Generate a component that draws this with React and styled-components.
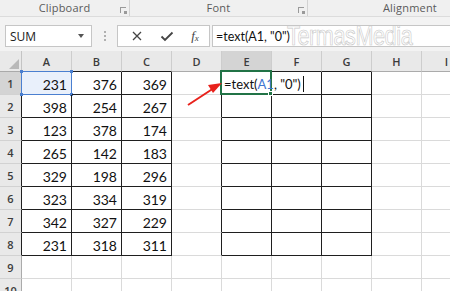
import React from "react"
import styled, { createGlobalStyle, css } from "styled-components"

const GlobalStyle = createGlobalStyle`
  html, body {
    margin: 0;
    padding: 0;
    background: #f3f3f3;
  }
  body {
    width: 450px;
    height: 291px;
    overflow: hidden;
    font-family: "Open Sans", "Liberation Sans", sans-serif;
  }
`

const COLS = ["A", "B", "C", "D", "E", "F", "G", "H", "I"]
const ROWS = [1, 2, 3, 4, 5, 6, 7, 8, 9, 10]

const DATA = [
  [231, 376, 369],
  [398, 254, 267],
  [123, 378, 174],
  [265, 142, 183],
  [329, 198, 296],
  [323, 334, 319],
  [342, 327, 229],
  [231, 318, 311],
]

// bordered ranges: A1:C8 and E1:G8 (col index 1-based, 0 = row header)
const RANGES = [
  { c1: 1, c2: 3, r1: 1, r2: 8 },
  { c1: 5, c2: 7, r1: 1, r2: 8 },
]

const rightDark = (r, c) =>
  RANGES.some(g => r >= g.r1 && r <= g.r2 && c >= g.c1 - 1 && c <= g.c2)
const bottomDark = (r, c) =>
  RANGES.some(g => c >= g.c1 && c <= g.c2 && r >= g.r1 - 1 && r <= g.r2)

const App = () => {
  return (
    <>
      <GlobalStyle />
      <Window>
        <RibbonLabels>
          <Group $width={130}>
            <GroupLabel>Clipboard</GroupLabel>
            <Launcher />
          </Group>
          <Group $width={178}>
            <GroupLabel>Font</GroupLabel>
            <Launcher />
          </Group>
          <Group $grow $align="flex-end">
            <GroupLabel $padRight={13}>Alignment</GroupLabel>
          </Group>
        </RibbonLabels>

        <FormulaRow>
          <NameBox>
            <span>SUM</span>
            <DropArrow />
          </NameBox>
          <Grip>
            <i />
            <i />
            <i />
          </Grip>
          <FormulaButtons>
            <IconButton>
              <svg width="12" height="12" viewBox="0 0 12 12">
                <path d="M2 2 L10 10 M10 2 L2 10" stroke="#444" strokeWidth="1.3" fill="none" />
              </svg>
            </IconButton>
            <IconButton>
              <svg width="14" height="12" viewBox="0 0 14 12">
                <path d="M1.5 6.5 L5 10 L12.5 2.5" stroke="#444" strokeWidth="1.8" fill="none" />
              </svg>
            </IconButton>
            <IconButton>
              <Fx>
                f<sub>x</sub>
              </Fx>
            </IconButton>
          </FormulaButtons>
          <FormulaInput>
            <FormulaText>=text(A1, "0")</FormulaText>
            <Watermark>TermasMedia</Watermark>
          </FormulaInput>
        </FormulaRow>

        <Sheet>
          <Corner>
            <svg width="10" height="10" viewBox="0 0 10 10">
              <path d="M10 0 L10 10 L0 10 Z" fill="#b9b9b9" />
            </svg>
          </Corner>
          {COLS.map((c, i) => (
            <ColHead key={c} $selected={c === "E"} $dark={bottomDark(0, i + 1)}>
              {c}
            </ColHead>
          ))}
          {ROWS.map(r => (
            <React.Fragment key={r}>
              <RowHead $selected={r === 1} $dark={rightDark(r, 0)}>
                {r}
              </RowHead>
              {COLS.map((c, i) => {
                const ci = i + 1
                const value = DATA[r - 1] && ci <= 3 ? DATA[r - 1][ci - 1] : null
                return (
                  <Cell
                    key={c}
                    $right={rightDark(r, ci)}
                    $bottom={bottomDark(r, ci)}
                  >
                    {r === 1 && c === "A" && (
                      <RefFrame>
                        <Handle $pos="tl" />
                        <Handle $pos="tr" />
                        <Handle $pos="bl" />
                        <Handle $pos="br" />
                      </RefFrame>
                    )}
                    {value !== null && <Num>{value}</Num>}
                    {r === 1 && c === "E" && (
                      <>
                        <ActiveFrame>
                          <FillHandle />
                        </ActiveFrame>
                        <Edit>
                          =text(<Ref>A1</Ref>, "0")<Caret />
                        </Edit>
                      </>
                    )}
                  </Cell>
                )
              })}
            </React.Fragment>
          ))}
          <Pointer width="450" height="240" viewBox="0 0 450 240">
            <line x1="188" y1="54" x2="214" y2="37" stroke="#e8221c" strokeWidth="2" />
            <path d="M222 32 L208 34 L213 42 Z" fill="#e8221c" />
          </Pointer>
        </Sheet>
      </Window>
    </>
  )
}

const Window = styled.div`
  width: 450px;
  height: 291px;
  overflow: hidden;
  display: flex;
  flex-direction: column;
`

const RibbonLabels = styled.div`
  height: 16px;
  display: flex;
  background: #f0f0f0;
  border-bottom: 1px solid #dcdcdc;
  flex-shrink: 0;
`

const Group = styled.div`
  width: ${p => (p.$grow ? "auto" : `${p.$width}px`)};
  flex: ${p => (p.$grow ? "1" : "0 0 auto")};
  display: flex;
  align-items: center;
  justify-content: ${p => p.$align || "center"};
  position: relative;
  border-right: ${p => (p.$grow ? "none" : "1px solid #d2d2d2")};
  box-sizing: border-box;
  height: 16px;
`

const GroupLabel = styled.span`
  font-size: 11px;
  color: #5a5a5a;
  letter-spacing: 0.2px;
  padding-right: ${p => p.$padRight || 0}px;
  line-height: 16px;
`

const Launcher = styled.span`
  position: absolute;
  right: 3px;
  top: 7px;
  width: 5px;
  height: 5px;
  border-left: 1px solid #9a9a9a;
  border-top: 1px solid #9a9a9a;
  &::after {
    content: "";
    position: absolute;
    right: -1px;
    bottom: -1px;
    width: 3px;
    height: 3px;
    background: #9a9a9a;
  }
`

const FormulaRow = styled.div`
  display: flex;
  align-items: stretch;
  height: 22px;
  margin: 8px 0 4px 5px;
  flex-shrink: 0;
`

const NameBox = styled.div`
  width: 87px;
  box-sizing: border-box;
  background: #fff;
  border: 1px solid #c6c6c6;
  display: flex;
  align-items: center;
  justify-content: space-between;
  padding: 0 7px 0 4px;
  font-size: 12px;
  color: #222;
`

const DropArrow = styled.span`
  width: 0;
  height: 0;
  border-left: 3.5px solid transparent;
  border-right: 3.5px solid transparent;
  border-top: 4px solid #555;
`

const Grip = styled.div`
  width: 25px;
  display: flex;
  flex-direction: column;
  align-items: center;
  justify-content: center;
  gap: 2px;
  i {
    display: block;
    width: 2px;
    height: 2px;
    background: #b0b0b0;
  }
`

const FormulaButtons = styled.div`
  width: 93px;
  box-sizing: border-box;
  background: #fff;
  border: 1px solid #c6c6c6;
  display: grid;
  grid-template-columns: 32px 28px 1fr;
  align-items: center;
  padding-left: 3px;
`

const IconButton = styled.span`
  display: flex;
  align-items: center;
  justify-content: center;
`

const Fx = styled.span`
  font-family: "Liberation Serif", serif;
  font-style: italic;
  font-size: 13px;
  color: #444;
  sub {
    font-size: 9px;
    vertical-align: -1px;
  }
`

const FormulaInput = styled.div`
  flex: 1;
  margin-left: 2px;
  background: #fff;
  border: 1px solid #c6c6c6;
  border-right: none;
  display: flex;
  align-items: center;
  padding-left: 3px;
  overflow: hidden;
  white-space: nowrap;
`

const FormulaText = styled.span`
  font-family: "Lato", "Open Sans", sans-serif;
  font-size: 12.5px;
  color: #111;
`

const Watermark = styled.span`
  display: inline-block;
  margin-left: -3px;
  font-family: "Liberation Sans", sans-serif;
  font-size: 27px;
  line-height: 22px;
  letter-spacing: -0.5px;
  color: #fff;
  -webkit-text-stroke: 0.7px #c9c9c9;
  transform: scaleX(0.8);
  transform-origin: left center;
`

const Sheet = styled.div`
  position: relative;
  display: grid;
  grid-template-columns: 22px repeat(9, 50px);
  grid-template-rows: 21px;
  grid-auto-rows: 23px;
  background: #fff;
  overflow: hidden;
  flex: 1;
`

const headBase = css`
  box-sizing: border-box;
  display: flex;
  align-items: center;
  justify-content: center;
  font-family: "Open Sans", sans-serif;
  font-size: 11px;
  font-weight: 600;
  color: #3c3c3c;
`

const Corner = styled.div`
  ${headBase};
  background: #e9e9e9;
  border-right: 1px solid #c4c4c4;
  border-bottom: 1px solid #aaa;
  align-items: flex-end;
  justify-content: flex-end;
  padding: 0 2px 2px 0;
`

const ColHead = styled.div`
  ${headBase};
  background: ${p => (p.$selected ? "#d4d4d4" : "#e9e9e9")};
  border-right: 1px solid #cdcdcd;
  border-bottom: 1px solid ${p => (p.$selected ? "#217346" : p.$dark ? "#1f1f1f" : "#ababab")};
  padding-top: 1px;
`

const RowHead = styled.div`
  ${headBase};
  background: ${p => (p.$selected ? "#d4d4d4" : "#e9e9e9")};
  border-right: 1px solid ${p => (p.$dark ? "#1f1f1f" : "#ababab")};
  border-bottom: 1px solid #d2d2d2;
  padding-top: 1px;
`

const Cell = styled.div`
  position: relative;
  box-sizing: border-box;
  border-right: 1px solid ${p => (p.$right ? "#1f1f1f" : "#dadada")};
  border-bottom: 1px solid ${p => (p.$bottom ? "#1f1f1f" : "#dadada")};
  display: flex;
  align-items: center;
  justify-content: flex-end;
  padding: 2px 4px 0 3px;
  font-family: "Lato", "Open Sans", sans-serif;
  font-size: 14px;
  color: #111;
  white-space: nowrap;
`

const Num = styled.span`
  position: relative;
  z-index: 1;
`

const RefFrame = styled.div`
  position: absolute;
  left: -1px;
  top: -1px;
  right: -1px;
  bottom: -1px;
  border: 1px solid #4a7fd0;
  background: #e9f0fb;
`

const handlePos = {
  tl: "left: -2px; top: -2px;",
  tr: "right: -2px; top: -2px;",
  bl: "left: -2px; bottom: -2px;",
  br: "right: -2px; bottom: -2px;",
}

const Handle = styled.span`
  position: absolute;
  width: 3px;
  height: 3px;
  background: #4a7fd0;
  ${p => handlePos[p.$pos]}
`

const ActiveFrame = styled.div`
  position: absolute;
  left: -2px;
  top: -2px;
  right: -1px;
  bottom: -1px;
  border: 2px solid #217346;
  z-index: 3;
`

const FillHandle = styled.span`
  position: absolute;
  right: -3px;
  bottom: -3px;
  width: 3px;
  height: 3px;
  background: #217346;
  border: 1px solid #fff;
`

const Edit = styled.span`
  position: absolute;
  left: 2px;
  top: 0;
  bottom: 0;
  display: flex;
  align-items: center;
  padding-top: 1px;
  font-size: 13px;
  color: #111;
  z-index: 4;
`

const Ref = styled.span`
  color: #3f76d1;
`

const Caret = styled.span`
  display: inline-block;
  width: 1px;
  height: 16px;
  margin-left: 2px;
  background: #111;
`

const Pointer = styled.svg`
  position: absolute;
  left: 0;
  top: 0;
  pointer-events: none;
  z-index: 5;
`

export default App
